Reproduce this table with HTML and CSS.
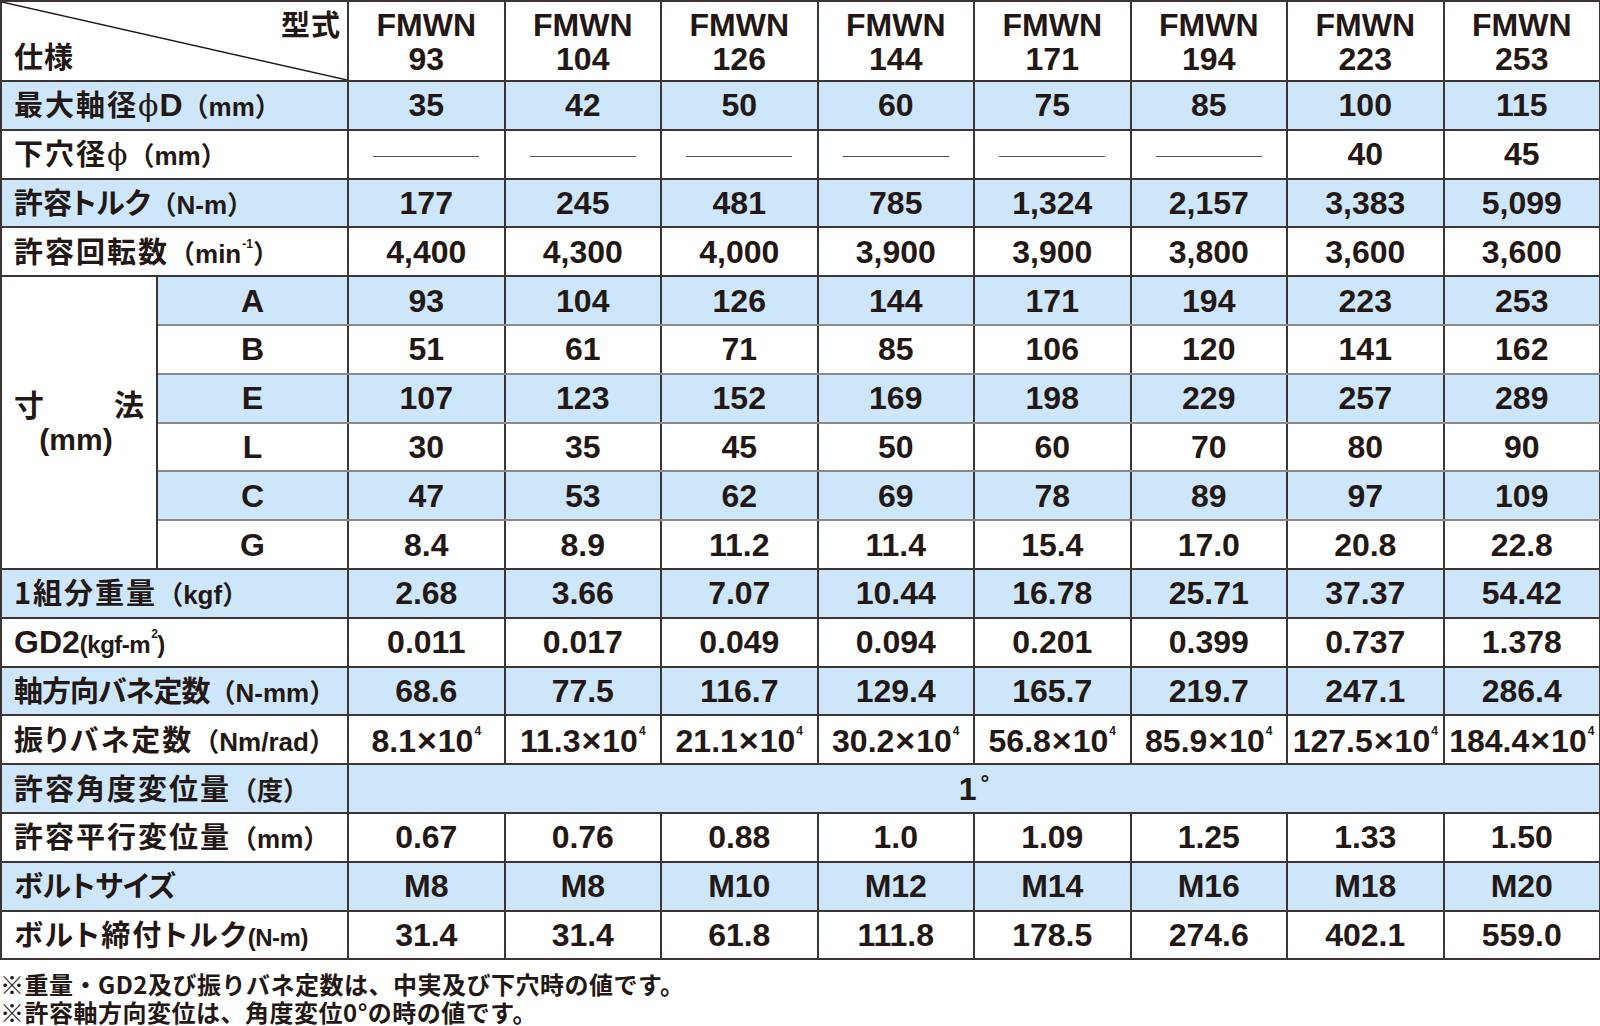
FILE: index.html
```html
<!DOCTYPE html>
<html lang="ja">
<head>
<meta charset="utf-8">
<title>FMWN 仕様</title>
<link rel="stylesheet" href="styles.css">
</head>
<body>
<table class="spec">
  <colgroup>
    <col class="c-a"><col class="c-b">
    <col class="c-d"><col class="c-d"><col class="c-d"><col class="c-d">
    <col class="c-d"><col class="c-d"><col class="c-d"><col class="c-d">
  </colgroup>
  <tr class="head">
    <th colspan="2" class="corner-cell">
      <div class="corner">
        <svg class="diag" viewBox="0 0 100 100" preserveAspectRatio="none"><line x1="0" y1="0" x2="100" y2="100" stroke="#231815" stroke-width="1.4" vector-effect="non-scaling-stroke"/></svg>
        <span class="c-top">型式</span>
        <span class="c-bot">仕様</span>
      </div>
    </th>
    <th>FMWN<br>93</th><th>FMWN<br>104</th><th>FMWN<br>126</th><th>FMWN<br>144</th>
    <th>FMWN<br>171</th><th>FMWN<br>194</th><th>FMWN<br>223</th><th>FMWN<br>253</th>
  </tr>
  <tr class="blue">
    <td colspan="2" class="lbl"><span class="jp">最大軸径</span><span class="phi">ϕ</span>D<span class="u">（mm）</span></td>
    <td>35</td><td>42</td><td>50</td><td>60</td><td>75</td><td>85</td><td>100</td><td>115</td>
  </tr>
  <tr>
    <td colspan="2" class="lbl"><span class="jp">下穴径</span><span class="phi">ϕ</span><span class="u">（mm）</span></td>
    <td><span class="dash"></span></td><td><span class="dash"></span></td><td><span class="dash"></span></td><td><span class="dash"></span></td>
    <td><span class="dash"></span></td><td><span class="dash"></span></td><td>40</td><td>45</td>
  </tr>
  <tr class="blue">
    <td colspan="2" class="lbl"><span class="jp tight2">許容トルク</span><span class="u">（N-m）</span></td>
    <td>177</td><td>245</td><td>481</td><td>785</td><td>1,324</td><td>2,157</td><td>3,383</td><td>5,099</td>
  </tr>
  <tr>
    <td colspan="2" class="lbl"><span class="jp">許容回転数</span><span class="u">（min<sup class="sm">-1</sup>）</span></td>
    <td>4,400</td><td>4,300</td><td>4,000</td><td>3,900</td><td>3,900</td><td>3,800</td><td>3,600</td><td>3,600</td>
  </tr>
  <tr class="blue sub">
    <td rowspan="6" class="dim"><div class="dim-t"><span>寸</span><span>法</span></div><div class="dim-u">(mm)</div></td>
    <td class="key">A</td>
    <td>93</td><td>104</td><td>126</td><td>144</td><td>171</td><td>194</td><td>223</td><td>253</td>
  </tr>
  <tr class="sub">
    <td class="key">B</td>
    <td>51</td><td>61</td><td>71</td><td>85</td><td>106</td><td>120</td><td>141</td><td>162</td>
  </tr>
  <tr class="blue sub">
    <td class="key">E</td>
    <td>107</td><td>123</td><td>152</td><td>169</td><td>198</td><td>229</td><td>257</td><td>289</td>
  </tr>
  <tr class="sub">
    <td class="key">L</td>
    <td>30</td><td>35</td><td>45</td><td>50</td><td>60</td><td>70</td><td>80</td><td>90</td>
  </tr>
  <tr class="blue sub">
    <td class="key">C</td>
    <td>47</td><td>53</td><td>62</td><td>69</td><td>78</td><td>89</td><td>97</td><td>109</td>
  </tr>
  <tr>
    <td class="key">G</td>
    <td>8.4</td><td>8.9</td><td>11.2</td><td>11.4</td><td>15.4</td><td>17.0</td><td>20.8</td><td>22.8</td>
  </tr>
  <tr class="blue">
    <td colspan="2" class="lbl"><span class="jp">1組分重量</span><span class="u">（kgf）</span></td>
    <td>2.68</td><td>3.66</td><td>7.07</td><td>10.44</td><td>16.78</td><td>25.71</td><td>37.37</td><td>54.42</td>
  </tr>
  <tr>
    <td colspan="2" class="lbl">GD2<span class="u2">(kgf-m<sup class="sm">2</sup>)</span></td>
    <td>0.011</td><td>0.017</td><td>0.049</td><td>0.094</td><td>0.201</td><td>0.399</td><td>0.737</td><td>1.378</td>
  </tr>
  <tr class="blue">
    <td colspan="2" class="lbl"><span class="jp tight">軸方向バネ定数</span><span class="u">（N-mm）</span></td>
    <td>68.6</td><td>77.5</td><td>116.7</td><td>129.4</td><td>165.7</td><td>219.7</td><td>247.1</td><td>286.4</td>
  </tr>
  <tr>
    <td colspan="2" class="lbl"><span class="jp">振りバネ定数</span><span class="u">（Nm/rad）</span></td>
    <td>8.1<span class="x">×</span>10<sup class="sm">4</sup></td><td>11.3<span class="x">×</span>10<sup class="sm">4</sup></td><td>21.1<span class="x">×</span>10<sup class="sm">4</sup></td><td>30.2<span class="x">×</span>10<sup class="sm">4</sup></td>
    <td>56.8<span class="x">×</span>10<sup class="sm">4</sup></td><td>85.9<span class="x">×</span>10<sup class="sm">4</sup></td><td>127.5<span class="x">×</span>10<sup class="sm">4</sup></td><td>184.4<span class="x">×</span>10<sup class="sm">4</sup></td>
  </tr>
  <tr class="blue">
    <td colspan="2" class="lbl"><span class="jp">許容角度変位量</span><span class="u">（度）</span></td>
    <td colspan="8">1<span class="deg">°</span></td>
  </tr>
  <tr>
    <td colspan="2" class="lbl"><span class="jp">許容平行変位量</span><span class="u">（mm）</span></td>
    <td>0.67</td><td>0.76</td><td>0.88</td><td>1.0</td><td>1.09</td><td>1.25</td><td>1.33</td><td>1.50</td>
  </tr>
  <tr class="blue">
    <td colspan="2" class="lbl"><span class="jp tight2">ボルトサイズ</span></td>
    <td>M8</td><td>M8</td><td>M10</td><td>M12</td><td>M14</td><td>M16</td><td>M18</td><td>M20</td>
  </tr>
  <tr>
    <td colspan="2" class="lbl"><span class="jp">ボルト締付トルク</span><span class="u2">(N-m)</span></td>
    <td>31.4</td><td>31.4</td><td>61.8</td><td>111.8</td><td>178.5</td><td>274.6</td><td>402.1</td><td>559.0</td>
  </tr>
</table>
<div class="notes">
  <p>※重量・GD2及び振りバネ定数は、中実及び下穴時の値です。</p>
  <p>※許容軸方向変位は、角度変位0°の時の値です。</p>
</div>
</body>
</html>
```

FILE: styles.css
```css
html, body {
  margin: 0;
  padding: 0;
  background: #ffffff;
}

body {
  color: #231815;
  font-family: "Liberation Sans", "Noto Sans CJK JP", sans-serif;
}

.spec {
  width: 1599px;
  table-layout: fixed;
  border-collapse: collapse;
  border: 2px solid #231815;
}

.c-a { width: 156px; }
.c-b { width: 191px; }
.c-d { width: 156.5px; }

.spec th,
.spec td {
  border: 2px solid #3d3534;
  padding: 0;
  text-align: center;
  vertical-align: middle;
  font-family: "Liberation Sans", "Noto Sans CJK JP", sans-serif;
  font-weight: 700;
  font-size: 32px;
  line-height: 1;
  white-space: nowrap;
  color: #231815;
}

.spec tr { height: 48.8px; }
.spec tr.head { height: 78px; }

.spec th {
  line-height: 34px;
  padding-top: 2px;
}

.blue td { background: #cde6f9; }
.blue td.dim { background: #ffffff; }

.sub td { border-bottom-color: #8a8a8a; }
.sub td.dim { border-bottom-color: #3d3534; }

.corner-cell { padding: 0 !important; }

.corner {
  position: relative;
  height: 78px;
  display: flex;
  flex-direction: column;
  justify-content: space-between;
  font-family: "Noto Sans CJK JP", sans-serif;
  font-size: 29px;
  line-height: 32px;
  letter-spacing: 1px;
}

.diag {
  position: absolute;
  left: 0;
  top: 0;
  width: 100%;
  height: 100%;
}

.c-top {
  align-self: flex-end;
  padding: 5px 6px 0 0;
}

.c-bot {
  align-self: flex-start;
  padding: 0 0 9px 12px;
}

.lbl {
  text-align: left !important;
  padding-left: 12px !important;
}

.jp {
  font-family: "Noto Sans CJK JP", sans-serif;
  font-size: 29px;
  letter-spacing: 2px;
  font-feature-settings: "palt";
}

.jp.tight { letter-spacing: -1px; }
.jp.tight2 { letter-spacing: 0; }

.u {
  font-size: 26px;
  letter-spacing: 0;
}

.u2 {
  font-size: 24px;
  letter-spacing: -0.5px;
}

.phi {
  font-family: "DejaVu Serif", serif;
  font-weight: 400;
  font-size: 30px;
  margin: 0 1px 0 0;
}

.x {
  font-size: 34px;
  font-weight: 700;
  line-height: 1;
  margin: 0 1px;
}

.sm {
  font-size: 12px;
  vertical-align: top;
  position: relative;
  top: 2px;
  margin-left: 1px;
}

.dash {
  display: inline-block;
  width: 106px;
  height: 1px;
  background: #555050;
  vertical-align: middle;
}

.key {
  font-size: 32px;
}

.dim {
  vertical-align: middle;
}

.dim-t {
  display: flex;
  justify-content: space-between;
  padding: 0 12px 0 12px;
  font-family: "Noto Sans CJK JP", sans-serif;
  font-size: 30px;
  line-height: 34px;
}

.dim-u {
  font-size: 30px;
  line-height: 40px;
  padding-right: 6px;
}

.deg {
  font-size: 22px;
  vertical-align: top;
  margin-left: 4px;
}

.notes {
  margin-top: 10px;
  font-family: "Noto Sans CJK JP", sans-serif;
  font-weight: 700;
  font-size: 24px;
  letter-spacing: 0.5px;
  line-height: 28px;
}

.notes p {
  margin: 0;
  white-space: nowrap;
}
```
